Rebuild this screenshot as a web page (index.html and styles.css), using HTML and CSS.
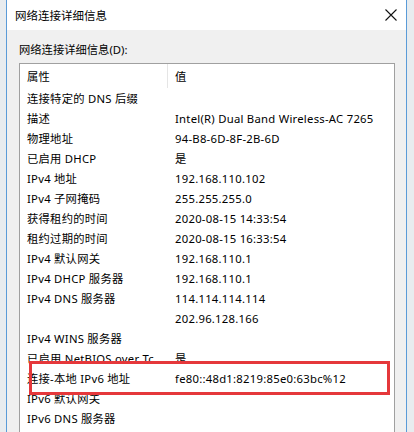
FILE: index.html
```html
<!DOCTYPE html>
<html>
<head>
<meta charset="utf-8">
<link rel="stylesheet" href="styles.css">
</head>
<body>
<div class="window">
  <div class="titlebar">
    <span class="title">网络连接详细信息</span>
    <svg class="close" width="12" height="12" viewBox="0 0 12 12"><path d="M0.5 0.5 L11.5 11.5 M11.5 0.5 L0.5 11.5" stroke="#111" stroke-width="1.1" fill="none"/></svg>
  </div>
  <div class="content">
    <div class="label">网络连接详细信息(D):</div>
    <div class="listbox">
      <div class="header">
        <div class="hcell c1">属性</div>
        <div class="hcell c2">值</div>
      </div>
      <div class="row"><div class="c1">连接特定的 DNS 后缀</div><div class="c2"></div></div>
      <div class="row"><div class="c1">描述</div><div class="c2">Intel(R) Dual Band Wireless-AC 7265</div></div>
      <div class="row"><div class="c1">物理地址</div><div class="c2">94-B8-6D-8F-2B-6D</div></div>
      <div class="row"><div class="c1">已启用 DHCP</div><div class="c2">是</div></div>
      <div class="row"><div class="c1">IPv4 地址</div><div class="c2">192.168.110.102</div></div>
      <div class="row"><div class="c1">IPv4 子网掩码</div><div class="c2">255.255.255.0</div></div>
      <div class="row"><div class="c1">获得租约的时间</div><div class="c2">2020-08-15 14:33:54</div></div>
      <div class="row"><div class="c1">租约过期的时间</div><div class="c2">2020-08-15 16:33:54</div></div>
      <div class="row"><div class="c1">IPv4 默认网关</div><div class="c2">192.168.110.1</div></div>
      <div class="row"><div class="c1">IPv4 DHCP 服务器</div><div class="c2">192.168.110.1</div></div>
      <div class="row"><div class="c1">IPv4 DNS 服务器</div><div class="c2">114.114.114.114</div></div>
      <div class="row"><div class="c1"></div><div class="c2">202.96.128.166</div></div>
      <div class="row"><div class="c1">IPv4 WINS 服务器</div><div class="c2"></div></div>
      <div class="row"><div class="c1">已启用 NetBIOS over Tc</div><div class="c2">是</div></div>
      <div class="row"><div class="c1">连接-本地 IPv6 地址</div><div class="c2">fe80::48d1:8219:85e0:63bc%12</div></div>
      <div class="row"><div class="c1">IPv6 默认网关</div><div class="c2"></div></div>
      <div class="row"><div class="c1">IPv6 DNS 服务器</div><div class="c2"></div></div>
      <div class="highlight"></div>
    </div>
  </div>
</div>
</body>
</html>
```
FILE: styles.css
```css
html, body {
  margin: 0;
  padding: 0;
  height: 432px;
  overflow: hidden;
  background: #e8ecef;
}
body {
  font-family: "Noto Sans", "Noto Sans CJK SC", sans-serif;
  font-size: 11.3px;
  color: #000;
}
.window {
  margin-left: 6px;
  width: 399px;
  height: 432px;
  border-left: 1px solid #5a9bd8;
  border-right: 1px solid #5a9bd8;
  background: #f0f0f0;
  display: flex;
  flex-direction: column;
  overflow: hidden;
}
.titlebar {
  height: 30px;
  background: #fff;
  display: flex;
  align-items: center;
  justify-content: space-between;
  padding: 0 9px 0 8px;
  flex-shrink: 0;
}
.title {
  font-size: 11.5px;
  margin-top: -1px;
}
.close {
  margin-top: -1px;
}
.content {
  padding: 0 11px 0 12px;
}
.label {
  height: 33px;
  line-height: 14px;
  padding-top: 13px;
  box-sizing: border-box;
}
.listbox {
  position: relative;
  background: #fff;
  border: 1px solid #a0a0a0;
  border-bottom: none;
  height: 368px;
  letter-spacing: 0.25px;
}
.header {
  display: flex;
  height: 24px;
  align-items: center;
}
.hcell.c1 {
  border-right: 1px solid #e5e5e5;
  height: 24px;
  display: flex;
  align-items: center;
  width: 140px;
}
.hcell.c2 {
  padding-left: 7px;
}
.row {
  display: flex;
  height: 20px;
  align-items: center;
  white-space: nowrap;
}
.c1 {
  width: 148px;
  padding-left: 7px;
  overflow: hidden;
  flex-shrink: 0;
}
.highlight {
  position: absolute;
  left: 9px;
  top: 297px;
  width: 355px;
  height: 28px;
  border: 3px solid #e5383b;
}
```
